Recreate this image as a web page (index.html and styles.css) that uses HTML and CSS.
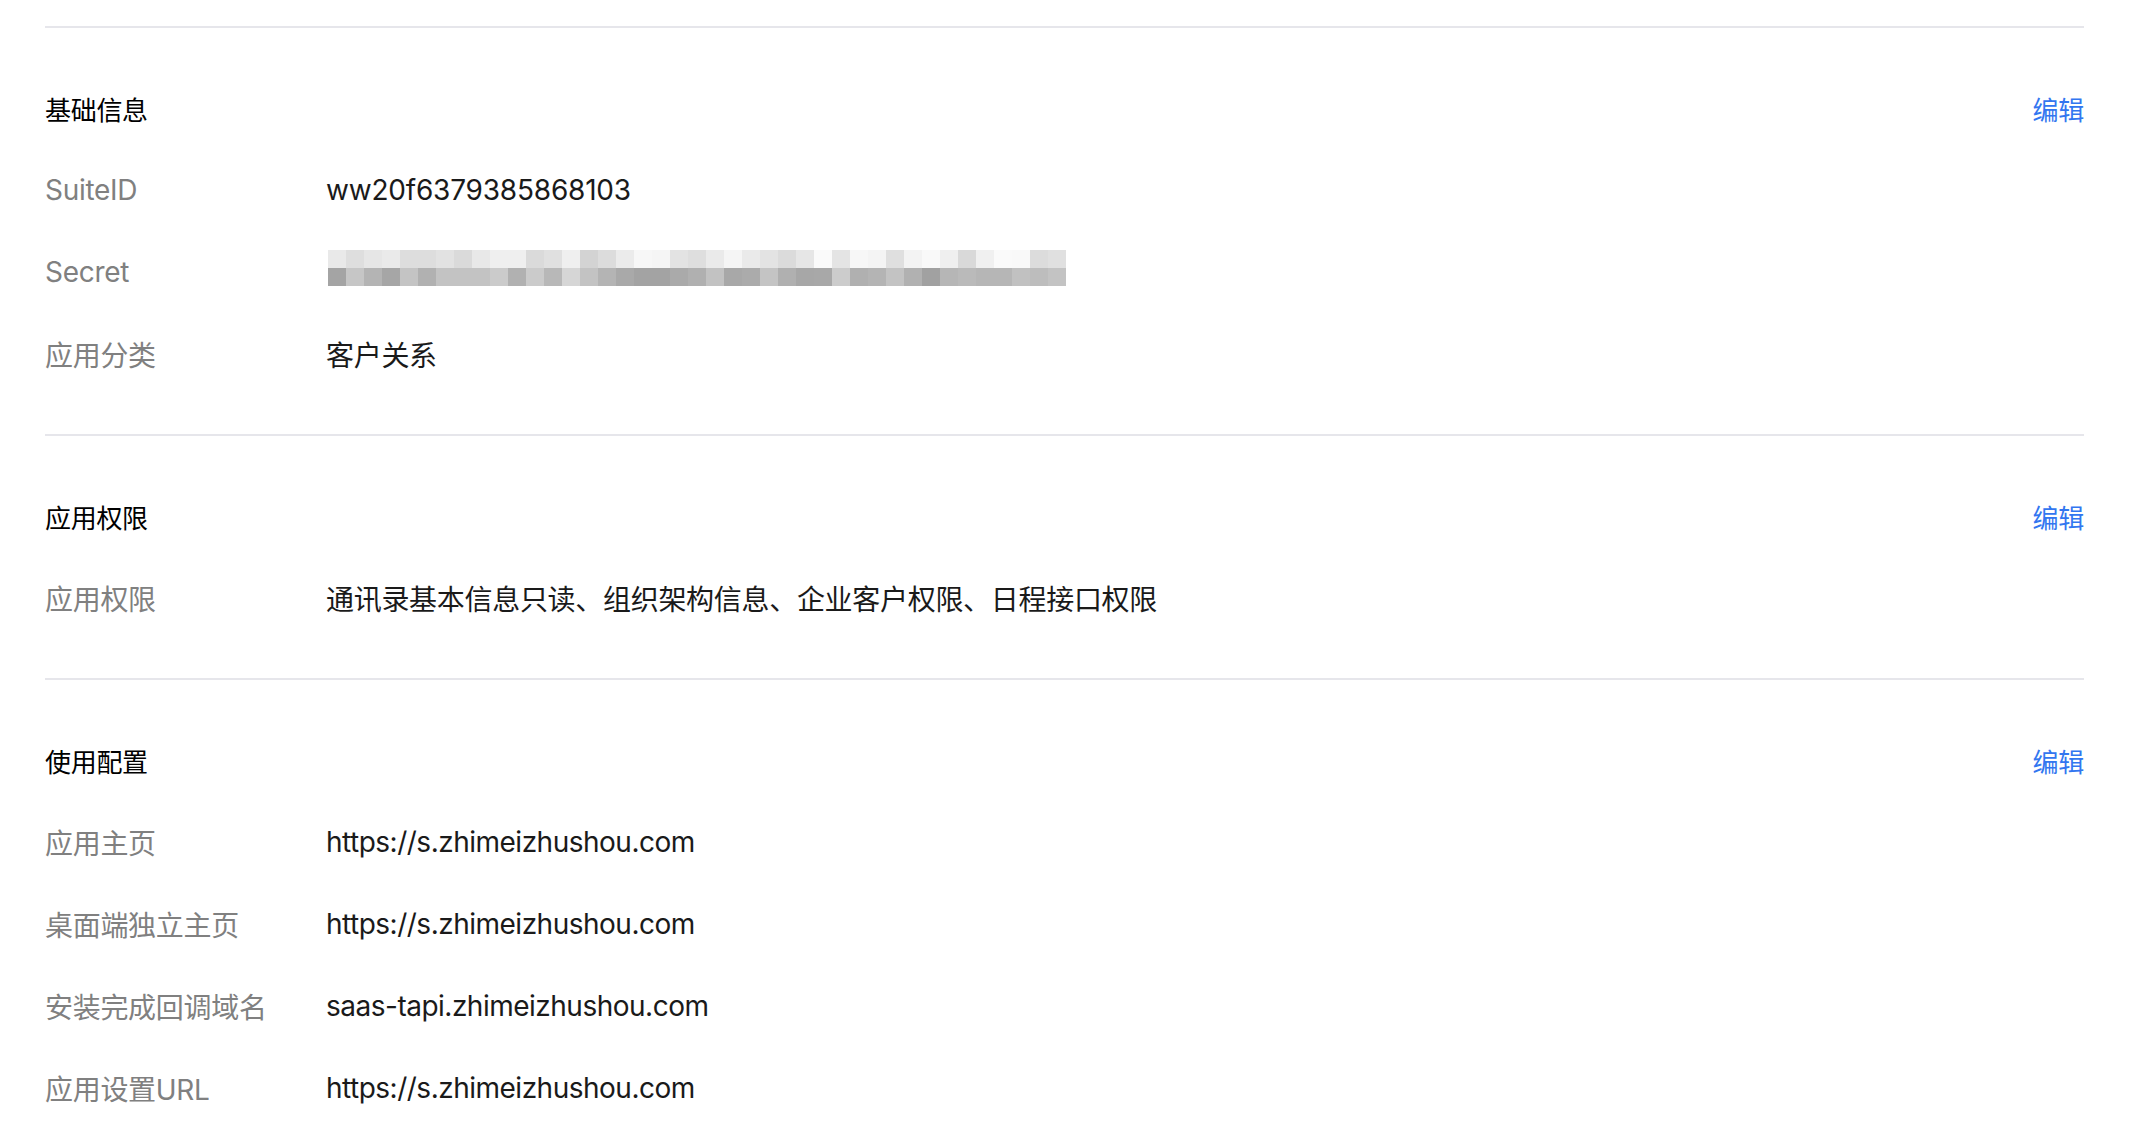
FILE: index.html
```html
<!DOCTYPE html>
<html lang="zh-CN">
 <head>
   <title>应用详情</title>
   <meta charset="utf-8">
   <link rel="stylesheet" href="styles.css">
 </head>
 <body>
  <div id="main">

    <div class="section">
      <div class="head"><span class="title">基础信息</span><a class="edit">编辑</a></div>
      <div class="row"><span class="label">SuiteID</span><span class="value en digits">ww20f6379385868103</span></div>
      <div class="row"><span class="label">Secret</span><span class="value"><span id="mosaic" class="mosaic"></span></span></div>
      <div class="row"><span class="label">应用分类</span><span class="value">客户关系</span></div>
    </div>

    <div class="section">
      <div class="head"><span class="title">应用权限</span><a class="edit">编辑</a></div>
      <div class="row"><span class="label">应用权限</span><span class="value">通讯录基本信息只读、组织架构信息、企业客户权限、日程接口权限</span></div>
    </div>

    <div class="section">
      <div class="head"><span class="title">使用配置</span><a class="edit">编辑</a></div>
      <div class="row"><span class="label">应用主页</span><span class="value en">https://s.zhimeizhushou.com</span></div>
      <div class="row"><span class="label">桌面端独立主页</span><span class="value en">https://s.zhimeizhushou.com</span></div>
      <div class="row"><span class="label">安装完成回调域名</span><span class="value en">saas-tapi.zhimeizhushou.com</span></div>
      <div class="row"><span class="label">应用设置URL</span><span class="value en">https://s.zhimeizhushou.com</span></div>
    </div>

  </div>
  <script>
    // secret is shown blurred, as a grid of gray squares
    var upperRow = ['e9','de','e6','ea','dd','dd','e2','da','e8','ef','ef','da','e0','ef','d3','dc','eb','f7','f5','e3','de',
                    'ea','f5','ea','e3','db','e6','fa','e4','f7','f4','df','f3','f9','ef','d9','f0','fa','f9','dc','e0'];
    var lowerRow = ['a4','c6','b4','a6','c4','b1','c3','c3','c3','cb','b1','cb','b8','d6','c3','b4','a9','a3','a3','aa','b0',
                    'c2','a8','ab','c4','b0','a7','a8','cc','b0','b4','c3','b1','a1','b6','ba','b6','b6','c1','bd','c3'];
    var mosaic = document.getElementById('mosaic');
    [upperRow, lowerRow].forEach(function (list) {
      var line = document.createElement('span');
      line.className = 'mosaic-line';
      for (var i = 0; i < list.length; i = i + 1) {
        var cell = document.createElement('span');
        cell.className = 'cell';
        cell.style.backgroundColor = '#' + list[i] + list[i] + list[i];
        line.appendChild(cell);
      }
      mosaic.appendChild(line);
    });
  </script>
 </body>
</html>
```

FILE: styles.css
```css
html, body {
  margin: 0;
  padding: 0;
  background: #fff;
}

body {
  font-family: Inter, "Noto Sans CJK SC", sans-serif;
  color: #1a1a1a;
}

#main {
  padding: 26px 60px 0 45px;
}

.section {
  border-top: 2px solid #e6e6eb;
  padding: 39px 0 39px;
}

.head, .row {
  display: flex;
  align-items: center;
  height: 82px;
}

.head {
  justify-content: space-between;
  font-size: 26px;
  letter-spacing: -0.3px;
}

.title {
  color: #000;
}

.edit {
  color: #3276f0;
  cursor: pointer;
}

.row {
  font-size: 28px;
  letter-spacing: -0.3px;
}

.label {
  width: 281px;
  flex-shrink: 0;
  color: #808080;
}

.value {
  color: #1a1a1a;
}

.value.en {
  letter-spacing: -0.5px;
}

.value.digits {
  letter-spacing: -0.2px;
}

.mosaic {
  display: flex;
  flex-direction: column;
  margin: -8px 0 0 2px;
}

.mosaic-line {
  display: flex;
}

.cell {
  width: 18px;
  height: 18px;
}
```
